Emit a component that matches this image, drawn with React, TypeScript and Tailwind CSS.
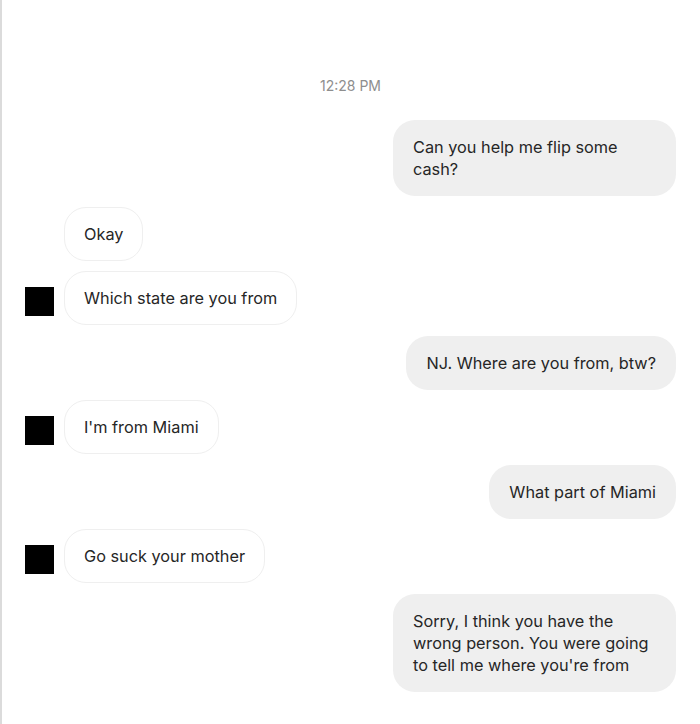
import React from "react";

type Msg = { text: string; mine: boolean; avatar?: boolean };

const messages: Msg[] = [
  { text: "Can you help me flip some cash?", mine: true },
  { text: "Okay", mine: false },
  { text: "Which state are you from", mine: false, avatar: true },
  { text: "NJ. Where are you from, btw?", mine: true },
  { text: "I'm from Miami", mine: false, avatar: true },
  { text: "What part of Miami", mine: true },
  { text: "Go suck your mother", mine: false, avatar: true },
  {
    text: "Sorry, I think you have the wrong person. You were going to tell me where you're from",
    mine: true,
  },
];

const Bubble: React.FC<{ msg: Msg }> = ({ msg }) => {
  if (msg.mine) {
    return (
      <div className="flex justify-end">
        <div className="max-w-[283px] rounded-[22px] bg-[#efefef] px-5 py-4 text-[16.3px] leading-[22px] text-[#262626]">
          {msg.text}
        </div>
      </div>
    );
  }
  return (
    <div className="flex items-end gap-[10px]">
      {/* avatar placeholder, blacked out */}
      <div className="mb-[9px] h-[29px] w-[29px] shrink-0">
        {msg.avatar && <div className="h-full w-full bg-black" />}
      </div>
      <div className="max-w-[283px] rounded-[22px] border border-[#efefef] bg-white px-[19px] py-[15px] text-[16.3px] leading-[22px] text-[#262626]">
        {msg.text}
      </div>
    </div>
  );
};

export default function App() {
  return (
    <div
      className="min-h-screen w-[700px] border-l-2 border-[#dbdbdb] bg-white pl-[23px] pr-6 pt-[76px]"
      style={{ fontFamily: 'Inter, "Liberation Sans", Arial, sans-serif' }}
    >
      <div className="mb-6 text-center text-[14px] leading-5 text-[#8e8e8e]">
        12:28 PM
      </div>
      <div className="flex flex-col gap-[10.5px]">
        {messages.map((m, i) => (
          <Bubble key={i} msg={m} />
        ))}
      </div>
    </div>
  );
}
